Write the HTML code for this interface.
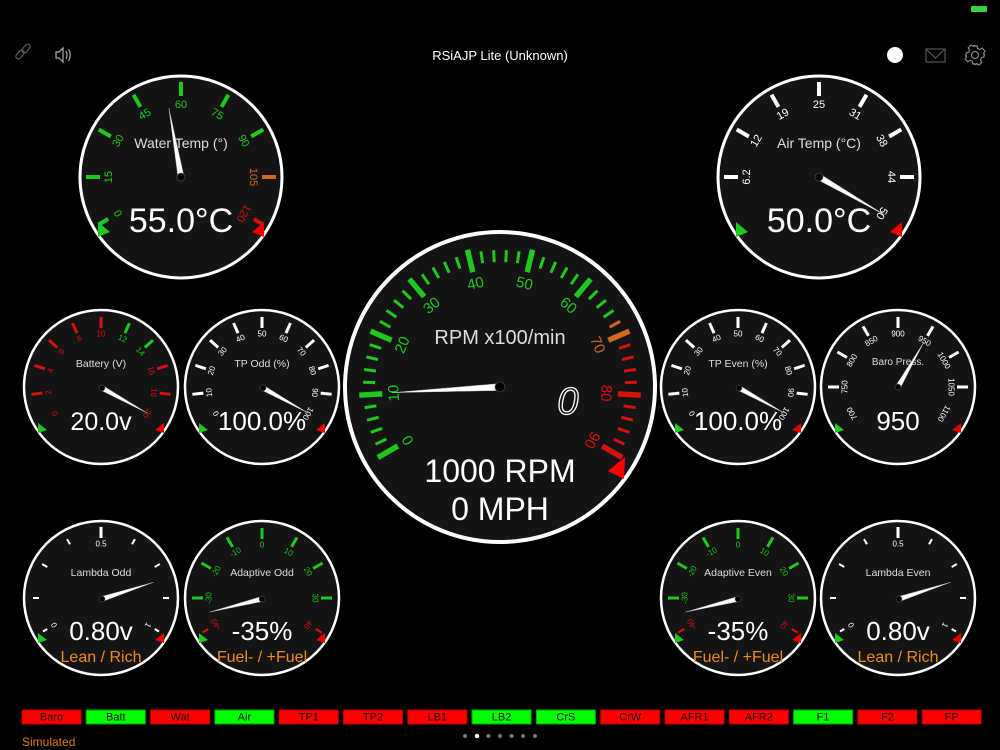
<!DOCTYPE html>
<html><head><meta charset="utf-8"><style>
html,body{margin:0;padding:0;background:#000;width:1000px;height:750px;overflow:hidden}
svg{display:block}
text{font-family:"Liberation Sans",sans-serif}
.lb text{text-anchor:middle;dominant-baseline:central}
.dial{fill:#141414;stroke:#fff}
.g{stroke:#1ec81e;fill:#1ec81e}
.r{stroke:#d81010;fill:#d81010}
.o{stroke:#d2691e;fill:#d2691e}
.w{stroke:#fff;fill:#fff}
text.g,text.r,text.o,text.w{stroke:none}
.nd{fill:#fff;stroke:#bbb;stroke-width:.4}
.ttl{fill:#ddd;text-anchor:middle}
.val{fill:#fff;text-anchor:middle}
.box text{font-size:11px;fill:#111;text-anchor:middle}
</style></head><body>
<svg width="1000" height="750" viewBox="0 0 1000 750">
<rect x="971" y="6" width="16" height="6" fill="#3ad43a" rx="1"/>
<text x="500" y="60" fill="#fff" font-size="13" text-anchor="middle">RSiAJP Lite (Unknown)</text>
<g stroke="#555" stroke-width="1.3" fill="none"><rect x="15" y="52" width="10" height="5" rx="2.5" transform="rotate(-50 20 54.5)"/><rect x="21" y="46" width="10" height="5" rx="2.5" transform="rotate(-50 26 48.5)"/></g>
<g stroke="#aaa" stroke-width="1.2" fill="none"><path d="M56 52h3l4-4v14l-4-4h-3z"/><path d="M66 51q2 4 0 8M68.5 49q3.5 6 0 12"/></g>
<circle cx="895" cy="55" r="8" fill="#fff"/>
<g stroke="#555" stroke-width="1.2" fill="none"><rect x="926" y="49" width="19" height="13"/><path d="M926 49l9.5 9 9.5-9"/></g>
<g transform="translate(975,55)" stroke="#888" stroke-width="1.2" fill="none"><circle r="3.5"/><path d="M-2 -9h4l.6 2.6 2.3 1 2.3-1.4 2.8 2.8-1.4 2.3 1 2.3L9-2v4l-2.6.6-1 2.3 1.4 2.3-2.8 2.8-2.3-1.4-2.3 1L2 9h-4l-.6-2.6-2.3-1-2.3 1.4-2.8-2.8 1.4-2.3-1-2.3L-9 2v-4l2.6-.6 1-2.3-1.4-2.3 2.8-2.8 2.3 1.4 2.3-1z"/></g>

<g transform="translate(181,177)">
<circle r="101" class="dial" stroke-width="3"/>
<g stroke-width="4">
<line class="g" y1="-81" y2="-95" transform="rotate(-90)"/><line class="g" y1="-81" y2="-95" transform="rotate(-60)"/><line class="g" y1="-81" y2="-95" transform="rotate(-30)"/><line class="g" y1="-81" y2="-95" transform="rotate(0)"/><line class="g" y1="-81" y2="-95" transform="rotate(30)"/><line class="g" y1="-81" y2="-95" transform="rotate(60)"/><line class="o" y1="-81" y2="-95" transform="rotate(90)"/><line class="g" y1="-84" y2="-95" transform="rotate(-120)"/><line class="r" y1="-84" y2="-95" transform="rotate(120)"/>
</g>
<g class="lb" font-size="11">
<text class="g" transform="rotate(-120) translate(0,-72)">0</text><text class="g" transform="rotate(-90) translate(0,-72)">15</text><text class="g" transform="rotate(-60) translate(0,-72)">30</text><text class="g" transform="rotate(-30) translate(0,-72)">45</text><text class="g" transform="rotate(0) translate(0,-72)">60</text><text class="g" transform="rotate(30) translate(0,-72)">75</text><text class="g" transform="rotate(60) translate(0,-72)">90</text><text class="o" transform="rotate(90) translate(0,-72)">105</text><text class="r" transform="rotate(120) translate(0,-72)">120</text>
</g>
<text class="ttl" y="-29" font-size="14">Water Temp (°)</text>
<polygon class="nd" points="-3,0 0,-70 3,0" transform="rotate(-10)"/><circle r="4" fill="#000" stroke="#666" stroke-width=".6"/>
<text class="val" y="55" font-size="34">55.0°C</text>
<polygon fill="#1ec81e" points="-83,45 -71,55 -83,60"/><polygon fill="#e00" points="83,45 71,55 83,60"/>
</g>

<g transform="translate(819,177)">
<circle r="101" class="dial" stroke-width="3"/>
<g stroke-width="4">
<line class="w" y1="-81" y2="-95" transform="rotate(-90)"/><line class="w" y1="-81" y2="-95" transform="rotate(-60)"/><line class="w" y1="-81" y2="-95" transform="rotate(-30)"/><line class="w" y1="-81" y2="-95" transform="rotate(0)"/><line class="w" y1="-81" y2="-95" transform="rotate(30)"/><line class="w" y1="-81" y2="-95" transform="rotate(60)"/><line class="w" y1="-81" y2="-95" transform="rotate(90)"/>
</g>
<g class="lb" font-size="11">
<text class="w" transform="rotate(-90) translate(0,-72)">6.2</text><text class="w" transform="rotate(-60) translate(0,-72)">12</text><text class="w" transform="rotate(-30) translate(0,-72)">19</text><text class="w" transform="rotate(0) translate(0,-72)">25</text><text class="w" transform="rotate(30) translate(0,-72)">31</text><text class="w" transform="rotate(60) translate(0,-72)">38</text><text class="w" transform="rotate(90) translate(0,-72)">44</text><text class="w" transform="rotate(120) translate(0,-72)">50</text>
</g>
<text class="ttl" y="-29" font-size="14">Air Temp (°C)</text>
<polygon class="nd" points="-3,0 0,-76 3,0" transform="rotate(120)"/><circle r="4" fill="#000" stroke="#666" stroke-width=".6"/>
<text class="val" y="55" font-size="34">50.0°C</text>
<polygon fill="#1ec81e" points="-83,45 -71,55 -83,60"/><polygon fill="#e00" points="83,45 71,55 83,60"/>
</g>

<g transform="translate(500,387)">
<circle r="155" class="dial" stroke-width="4"/>
<g stroke-width="3">
<line class="g" y1="-125" y2="-137" transform="rotate(-114.67)"/><line class="g" y1="-125" y2="-137" transform="rotate(-109.33)"/><line class="g" y1="-125" y2="-137" transform="rotate(-104)"/><line class="g" y1="-125" y2="-137" transform="rotate(-98.67)"/>
<line class="g" y1="-125" y2="-137" transform="rotate(-88)"/><line class="g" y1="-125" y2="-137" transform="rotate(-82.67)"/><line class="g" y1="-125" y2="-137" transform="rotate(-77.33)"/><line class="g" y1="-125" y2="-137" transform="rotate(-72)"/>
<line class="g" y1="-125" y2="-137" transform="rotate(-61.33)"/><line class="g" y1="-125" y2="-137" transform="rotate(-56)"/><line class="g" y1="-125" y2="-137" transform="rotate(-50.67)"/><line class="g" y1="-125" y2="-137" transform="rotate(-45.33)"/>
<line class="g" y1="-125" y2="-137" transform="rotate(-34.67)"/><line class="g" y1="-125" y2="-137" transform="rotate(-29.33)"/><line class="g" y1="-125" y2="-137" transform="rotate(-24)"/><line class="g" y1="-125" y2="-137" transform="rotate(-18.67)"/>
<line class="g" y1="-125" y2="-137" transform="rotate(-8)"/><line class="g" y1="-125" y2="-137" transform="rotate(-2.67)"/><line class="g" y1="-125" y2="-137" transform="rotate(2.67)"/><line class="g" y1="-125" y2="-137" transform="rotate(8)"/>
<line class="g" y1="-125" y2="-137" transform="rotate(18.67)"/><line class="g" y1="-125" y2="-137" transform="rotate(24)"/><line class="g" y1="-125" y2="-137" transform="rotate(29.33)"/><line class="g" y1="-125" y2="-137" transform="rotate(34.67)"/>
<line class="g" y1="-125" y2="-137" transform="rotate(45.33)"/><line class="g" y1="-125" y2="-137" transform="rotate(50.67)"/><line class="g" y1="-125" y2="-137" transform="rotate(56)"/><line class="o" y1="-125" y2="-137" transform="rotate(61.33)"/>
<line class="r" y1="-125" y2="-137" transform="rotate(72)"/><line class="r" y1="-125" y2="-137" transform="rotate(77.33)"/><line class="r" y1="-125" y2="-137" transform="rotate(82.67)"/><line class="r" y1="-125" y2="-137" transform="rotate(88)"/>
<line class="r" y1="-125" y2="-137" transform="rotate(98.67)"/><line class="r" y1="-125" y2="-137" transform="rotate(104)"/><line class="r" y1="-125" y2="-137" transform="rotate(109.33)"/><line class="r" y1="-125" y2="-137" transform="rotate(114.67)"/>
</g>
<g stroke-width="5.5">
<line class="g" y1="-118" y2="-141" transform="rotate(-120)"/><line class="g" y1="-118" y2="-141" transform="rotate(-93.33)"/><line class="g" y1="-118" y2="-141" transform="rotate(-66.67)"/><line class="g" y1="-118" y2="-141" transform="rotate(-40)"/><line class="g" y1="-118" y2="-141" transform="rotate(-13.33)"/><line class="g" y1="-118" y2="-141" transform="rotate(13.33)"/><line class="g" y1="-118" y2="-141" transform="rotate(40)"/><line class="o" y1="-118" y2="-141" transform="rotate(66.67)"/><line class="r" y1="-118" y2="-141" transform="rotate(93.33)"/><line class="r" y1="-118" y2="-141" transform="rotate(120)"/>
</g>
<g class="lb" font-size="15">
<text class="g" transform="rotate(-120) translate(0,-106)">0</text><text class="g" transform="rotate(-93.33) translate(0,-106)">10</text><text class="g" transform="rotate(-66.67) translate(0,-106)">20</text><text class="g" transform="rotate(-40) translate(0,-106)">30</text><text class="g" transform="rotate(-13.33) translate(0,-106)">40</text><text class="g" transform="rotate(13.33) translate(0,-106)">50</text><text class="g" transform="rotate(40) translate(0,-106)">60</text><text class="o" transform="rotate(66.67) translate(0,-106)">70</text><text class="r" transform="rotate(93.33) translate(0,-106)">80</text><text class="r" transform="rotate(120) translate(0,-106)">90</text>
</g>
<text class="ttl" y="-43" font-size="20" fill="#eee">RPM x100/min</text>
<text x="68" y="27" font-size="38" font-style="italic" fill="#141414" stroke="#fff" stroke-width="1.3" text-anchor="middle">0</text>
<polygon class="nd" points="-3.5,1 0,-108 3.5,1" transform="rotate(-93)"/><circle r="5" fill="#000" stroke="#555" stroke-width=".6"/>
<text class="val" y="95" font-size="32">1000 RPM</text>
<text class="val" y="133" font-size="32">0 MPH</text>
<polygon fill="#f00" points="125,70 108,84 124,92"/>
</g>

<g transform="translate(101,387)">
<circle r="77" class="dial" stroke-width="2.5"/>
<g stroke-width="3">
<line class="r" y1="-59" y2="-70" transform="rotate(-96)"/><line class="r" y1="-59" y2="-70" transform="rotate(-72)"/><line class="r" y1="-59" y2="-70" transform="rotate(-48)"/><line class="r" y1="-59" y2="-70" transform="rotate(-24)"/><line class="r" y1="-59" y2="-70" transform="rotate(0)"/><line class="g" y1="-59" y2="-70" transform="rotate(24)"/><line class="g" y1="-59" y2="-70" transform="rotate(48)"/><line class="r" y1="-59" y2="-70" transform="rotate(72)"/><line class="r" y1="-59" y2="-70" transform="rotate(96)"/>
</g>
<g class="lb" font-size="8">
<text class="r" transform="rotate(-120) translate(0,-53)">0</text><text class="r" transform="rotate(-96) translate(0,-53)">2</text><text class="r" transform="rotate(-72) translate(0,-53)">4</text><text class="r" transform="rotate(-48) translate(0,-53)">6</text><text class="r" transform="rotate(-24) translate(0,-53)">8</text><text class="r" transform="rotate(0) translate(0,-53)">10</text><text class="g" transform="rotate(24) translate(0,-53)">12</text><text class="g" transform="rotate(48) translate(0,-53)">14</text><text class="r" transform="rotate(72) translate(0,-53)">16</text><text class="r" transform="rotate(96) translate(0,-53)">18</text><text class="r" transform="rotate(120) translate(0,-53)">20</text>
</g>
<text class="ttl" y="-20" font-size="10.5">Battery (V)</text>
<polygon class="nd" points="-2.5,0 0,-52 2.5,0" transform="translate(1,1) rotate(119)"/><circle cx="1" cy="1" r="3" fill="#000" stroke="#666" stroke-width=".5"/>
<text class="val" y="43" font-size="25">20.0v</text>
<polygon fill="#1ec81e" points="-63,36 -54,43 -63,46"/><polygon fill="#e00" points="63,36 54,43 63,46"/>
</g>

<g transform="translate(262,387)">
<circle r="77" class="dial" stroke-width="2.5"/>
<g stroke-width="3" class="w">
<line y1="-59" y2="-70" transform="rotate(-96)"/><line y1="-59" y2="-70" transform="rotate(-72)"/><line y1="-59" y2="-70" transform="rotate(-48)"/><line y1="-59" y2="-70" transform="rotate(-24)"/><line y1="-59" y2="-70" transform="rotate(0)"/><line y1="-59" y2="-70" transform="rotate(24)"/><line y1="-59" y2="-70" transform="rotate(48)"/><line y1="-59" y2="-70" transform="rotate(72)"/><line y1="-59" y2="-70" transform="rotate(96)"/>
</g>
<g class="lb" font-size="8" fill="#fff">
<text transform="rotate(-120) translate(0,-53)">0</text><text transform="rotate(-96) translate(0,-53)">10</text><text transform="rotate(-72) translate(0,-53)">20</text><text transform="rotate(-48) translate(0,-53)">30</text><text transform="rotate(-24) translate(0,-53)">40</text><text transform="rotate(0) translate(0,-53)">50</text><text transform="rotate(24) translate(0,-53)">60</text><text transform="rotate(48) translate(0,-53)">70</text><text transform="rotate(72) translate(0,-53)">80</text><text transform="rotate(96) translate(0,-53)">90</text><text transform="rotate(120) translate(0,-53)">100</text>
</g>
<text class="ttl" y="-20" font-size="10.5">TP Odd (%)</text>
<polygon class="nd" points="-2.5,0 0,-52 2.5,0" transform="translate(1,1) rotate(119)"/><circle cx="1" cy="1" r="3" fill="#000" stroke="#666" stroke-width=".5"/>
<text class="val" y="43" font-size="26">100.0%</text>
<polygon fill="#1ec81e" points="-63,36 -54,43 -63,46"/><polygon fill="#e00" points="63,36 54,43 63,46"/>
</g>
<g transform="translate(738,387)">
<circle r="77" class="dial" stroke-width="2.5"/>
<g stroke-width="3" class="w">
<line y1="-59" y2="-70" transform="rotate(-96)"/><line y1="-59" y2="-70" transform="rotate(-72)"/><line y1="-59" y2="-70" transform="rotate(-48)"/><line y1="-59" y2="-70" transform="rotate(-24)"/><line y1="-59" y2="-70" transform="rotate(0)"/><line y1="-59" y2="-70" transform="rotate(24)"/><line y1="-59" y2="-70" transform="rotate(48)"/><line y1="-59" y2="-70" transform="rotate(72)"/><line y1="-59" y2="-70" transform="rotate(96)"/>
</g>
<g class="lb" font-size="8" fill="#fff">
<text transform="rotate(-120) translate(0,-53)">0</text><text transform="rotate(-96) translate(0,-53)">10</text><text transform="rotate(-72) translate(0,-53)">20</text><text transform="rotate(-48) translate(0,-53)">30</text><text transform="rotate(-24) translate(0,-53)">40</text><text transform="rotate(0) translate(0,-53)">50</text><text transform="rotate(24) translate(0,-53)">60</text><text transform="rotate(48) translate(0,-53)">70</text><text transform="rotate(72) translate(0,-53)">80</text><text transform="rotate(96) translate(0,-53)">90</text><text transform="rotate(120) translate(0,-53)">100</text>
</g>
<text class="ttl" y="-20" font-size="10.5">TP Even (%)</text>
<polygon class="nd" points="-2.5,0 0,-52 2.5,0" transform="translate(1,1) rotate(119)"/><circle cx="1" cy="1" r="3" fill="#000" stroke="#666" stroke-width=".5"/>
<text class="val" y="43" font-size="26">100.0%</text>
<polygon fill="#1ec81e" points="-63,36 -54,43 -63,46"/><polygon fill="#e00" points="63,36 54,43 63,46"/>
</g>

<g transform="translate(898,387)">
<circle r="77" class="dial" stroke-width="2.5"/>
<g stroke-width="3" class="w">
<line y1="-59" y2="-70" transform="rotate(-90)"/><line y1="-59" y2="-70" transform="rotate(-60)"/><line y1="-59" y2="-70" transform="rotate(-30)"/><line y1="-59" y2="-70" transform="rotate(0)"/><line y1="-59" y2="-70" transform="rotate(30)"/><line y1="-59" y2="-70" transform="rotate(60)"/><line y1="-59" y2="-70" transform="rotate(90)"/>
</g>
<g class="lb" font-size="8" fill="#fff">
<text transform="rotate(-120) translate(0,-53)">700</text><text transform="rotate(-90) translate(0,-53)">750</text><text transform="rotate(-60) translate(0,-53)">800</text><text transform="rotate(-30) translate(0,-53)">850</text><text transform="rotate(0) translate(0,-53)">900</text><text transform="rotate(30) translate(0,-53)">950</text><text transform="rotate(60) translate(0,-53)">1000</text><text transform="rotate(90) translate(0,-53)">1050</text><text transform="rotate(120) translate(0,-53)">1100</text>
</g>
<text class="ttl" y="-22" font-size="10">Baro Press.</text>
<polygon class="nd" points="-2.5,0 0,-52 2.5,0" transform="rotate(30)"/><circle r="3" fill="#000" stroke="#666" stroke-width=".5"/>
<text class="val" y="43" font-size="26">950</text>
<polygon fill="#1ec81e" points="-63,36 -54,43 -63,46"/><polygon fill="#e00" points="63,36 54,43 63,46"/>
</g>

<g transform="translate(101,598)">
<circle r="77" class="dial" stroke-width="2.5"/>
<g class="w" stroke-width="2">
<line y1="-62" y2="-68" transform="rotate(-90)"/><line y1="-62" y2="-68" transform="rotate(-60)"/><line y1="-62" y2="-68" transform="rotate(-30)"/><line y1="-60" y2="-71" stroke-width="3" transform="rotate(0)"/><line y1="-62" y2="-68" transform="rotate(30)"/><line y1="-62" y2="-68" transform="rotate(60)"/><line y1="-62" y2="-68" transform="rotate(90)"/><line y1="-62" y2="-67" transform="rotate(-120)"/><line y1="-62" y2="-67" transform="rotate(120)"/>
</g>
<g class="lb" font-size="8" fill="#fff">
<text transform="rotate(-120) translate(0,-54)">0</text><text transform="translate(0,-54)">0.5</text><text transform="rotate(120) translate(0,-54)">1</text>
</g>
<text class="ttl" y="-22" font-size="10.5">Lambda Odd</text>
<polygon class="nd" points="-2.5,0 0,-54 2.5,0" transform="translate(1,1) rotate(72)"/><circle cx="1" cy="1" r="3" fill="#000" stroke="#666" stroke-width=".5"/>
<text class="val" y="42" font-size="26">0.80v</text>
<text y="64" font-size="16" fill="#f08a1a" text-anchor="middle">Lean / Rich</text>
<polygon fill="#1ec81e" points="-63,35 -54,42 -63,45"/><polygon fill="#e00" points="63,35 54,42 63,45"/>
</g>
<g transform="translate(898,598)">
<circle r="77" class="dial" stroke-width="2.5"/>
<g class="w" stroke-width="2">
<line y1="-62" y2="-68" transform="rotate(-90)"/><line y1="-62" y2="-68" transform="rotate(-60)"/><line y1="-62" y2="-68" transform="rotate(-30)"/><line y1="-60" y2="-71" stroke-width="3" transform="rotate(0)"/><line y1="-62" y2="-68" transform="rotate(30)"/><line y1="-62" y2="-68" transform="rotate(60)"/><line y1="-62" y2="-68" transform="rotate(90)"/><line y1="-62" y2="-67" transform="rotate(-120)"/><line y1="-62" y2="-67" transform="rotate(120)"/>
</g>
<g class="lb" font-size="8" fill="#fff">
<text transform="rotate(-120) translate(0,-54)">0</text><text transform="translate(0,-54)">0.5</text><text transform="rotate(120) translate(0,-54)">1</text>
</g>
<text class="ttl" y="-22" font-size="10.5">Lambda Even</text>
<polygon class="nd" points="-2.5,0 0,-54 2.5,0" transform="translate(1,1) rotate(72)"/><circle cx="1" cy="1" r="3" fill="#000" stroke="#666" stroke-width=".5"/>
<text class="val" y="42" font-size="26">0.80v</text>
<text y="64" font-size="16" fill="#f08a1a" text-anchor="middle">Lean / Rich</text>
<polygon fill="#1ec81e" points="-63,35 -54,42 -63,45"/><polygon fill="#e00" points="63,35 54,42 63,45"/>
</g>

<g transform="translate(262,598)">
<circle r="77" class="dial" stroke-width="2.5"/>
<g stroke-width="3">
<line class="g" y1="-59" y2="-70" transform="rotate(-90)"/><line class="g" y1="-59" y2="-70" transform="rotate(-60)"/><line class="g" y1="-59" y2="-70" transform="rotate(-30)"/><line class="g" y1="-59" y2="-70" transform="rotate(0)"/><line class="g" y1="-59" y2="-70" transform="rotate(30)"/><line class="g" y1="-59" y2="-70" transform="rotate(60)"/><line class="g" y1="-59" y2="-70" transform="rotate(90)"/><line class="r" y1="-62" y2="-69" stroke-width="2" transform="rotate(-120)"/><line class="r" y1="-62" y2="-69" stroke-width="2" transform="rotate(120)"/>
</g>
<g class="lb" font-size="8">
<text class="r" transform="rotate(-120) translate(0,-53)">-40</text><text class="g" transform="rotate(-90) translate(0,-53)">-30</text><text class="g" transform="rotate(-60) translate(0,-53)">-20</text><text class="g" transform="rotate(-30) translate(0,-53)">-10</text><text class="g" transform="rotate(0) translate(0,-53)">0</text><text class="g" transform="rotate(30) translate(0,-53)">10</text><text class="g" transform="rotate(60) translate(0,-53)">20</text><text class="g" transform="rotate(90) translate(0,-53)">30</text><text class="r" transform="rotate(120) translate(0,-53)">40</text>
</g>
<text class="ttl" y="-22" font-size="10.5">Adaptive Odd</text>
<polygon class="nd" points="-2.5,0 0,-54 2.5,0" transform="translate(0,1) rotate(-104)"/><circle cy="1" r="3" fill="#000" stroke="#666" stroke-width=".5"/>
<text class="val" y="42" font-size="26">-35%</text>
<text y="64" font-size="16" fill="#f08a1a" text-anchor="middle">Fuel- / +Fuel</text>
<polygon fill="#1ec81e" points="-63,35 -54,42 -63,45"/><polygon fill="#e00" points="63,35 54,42 63,45"/>
</g>
<g transform="translate(738,598)">
<circle r="77" class="dial" stroke-width="2.5"/>
<g stroke-width="3">
<line class="g" y1="-59" y2="-70" transform="rotate(-90)"/><line class="g" y1="-59" y2="-70" transform="rotate(-60)"/><line class="g" y1="-59" y2="-70" transform="rotate(-30)"/><line class="g" y1="-59" y2="-70" transform="rotate(0)"/><line class="g" y1="-59" y2="-70" transform="rotate(30)"/><line class="g" y1="-59" y2="-70" transform="rotate(60)"/><line class="g" y1="-59" y2="-70" transform="rotate(90)"/><line class="r" y1="-62" y2="-69" stroke-width="2" transform="rotate(-120)"/><line class="r" y1="-62" y2="-69" stroke-width="2" transform="rotate(120)"/>
</g>
<g class="lb" font-size="8">
<text class="r" transform="rotate(-120) translate(0,-53)">-40</text><text class="g" transform="rotate(-90) translate(0,-53)">-30</text><text class="g" transform="rotate(-60) translate(0,-53)">-20</text><text class="g" transform="rotate(-30) translate(0,-53)">-10</text><text class="g" transform="rotate(0) translate(0,-53)">0</text><text class="g" transform="rotate(30) translate(0,-53)">10</text><text class="g" transform="rotate(60) translate(0,-53)">20</text><text class="g" transform="rotate(90) translate(0,-53)">30</text><text class="r" transform="rotate(120) translate(0,-53)">40</text>
</g>
<text class="ttl" y="-22" font-size="10.5">Adaptive Even</text>
<polygon class="nd" points="-2.5,0 0,-54 2.5,0" transform="translate(0,1) rotate(-104)"/><circle cy="1" r="3" fill="#000" stroke="#666" stroke-width=".5"/>
<text class="val" y="42" font-size="26">-35%</text>
<text y="64" font-size="16" fill="#f08a1a" text-anchor="middle">Fuel- / +Fuel</text>
<polygon fill="#1ec81e" points="-63,35 -54,42 -63,45"/><polygon fill="#e00" points="63,35 54,42 63,45"/>
</g>

<g class="box">
<rect x="22" y="710" width="59" height="14" fill="#f00" stroke="#b00"/><text x="51.5" y="720.5">Baro</text>
<rect x="86.3" y="710" width="59" height="14" fill="#0f0" stroke="#0a0"/><text x="115.8" y="720.5">Batt</text>
<rect x="150.6" y="710" width="59" height="14" fill="#f00" stroke="#b00"/><text x="180.1" y="720.5">Wat</text>
<rect x="214.9" y="710" width="59" height="14" fill="#0f0" stroke="#0a0"/><text x="244.4" y="720.5">Air</text>
<rect x="279.2" y="710" width="59" height="14" fill="#f00" stroke="#b00"/><text x="308.7" y="720.5">TP1</text>
<rect x="343.5" y="710" width="59" height="14" fill="#f00" stroke="#b00"/><text x="373" y="720.5">TP2</text>
<rect x="407.8" y="710" width="59" height="14" fill="#f00" stroke="#b00"/><text x="437.3" y="720.5">LB1</text>
<rect x="472.1" y="710" width="59" height="14" fill="#0f0" stroke="#0a0"/><text x="501.6" y="720.5">LB2</text>
<rect x="536.4" y="710" width="59" height="14" fill="#0f0" stroke="#0a0"/><text x="565.9" y="720.5">CrS</text>
<rect x="600.7" y="710" width="59" height="14" fill="#f00" stroke="#b00"/><text x="630.2" y="720.5">CrW</text>
<rect x="665" y="710" width="59" height="14" fill="#f00" stroke="#b00"/><text x="694.5" y="720.5">AFR1</text>
<rect x="729.3" y="710" width="59" height="14" fill="#f00" stroke="#b00"/><text x="758.8" y="720.5">AFR2</text>
<rect x="793.6" y="710" width="59" height="14" fill="#0f0" stroke="#0a0"/><text x="823.1" y="720.5">F1</text>
<rect x="857.9" y="710" width="59" height="14" fill="#f00" stroke="#b00"/><text x="887.4" y="720.5">F2</text>
<rect x="922.2" y="710" width="59" height="14" fill="#f00" stroke="#b00"/><text x="951.7" y="720.5">FP</text>
</g>
<text x="22" y="746" font-size="12" fill="#e07a10">Simulated</text>
<g fill="#777"><circle cx="465" cy="736" r="2"/><circle cx="477" cy="736" r="2.2" fill="#fff"/><circle cx="488.5" cy="736" r="2"/><circle cx="500" cy="736" r="2"/><circle cx="511.5" cy="736" r="2"/><circle cx="523" cy="736" r="2"/><circle cx="535" cy="736" r="2"/></g>
</svg>
</body></html>
